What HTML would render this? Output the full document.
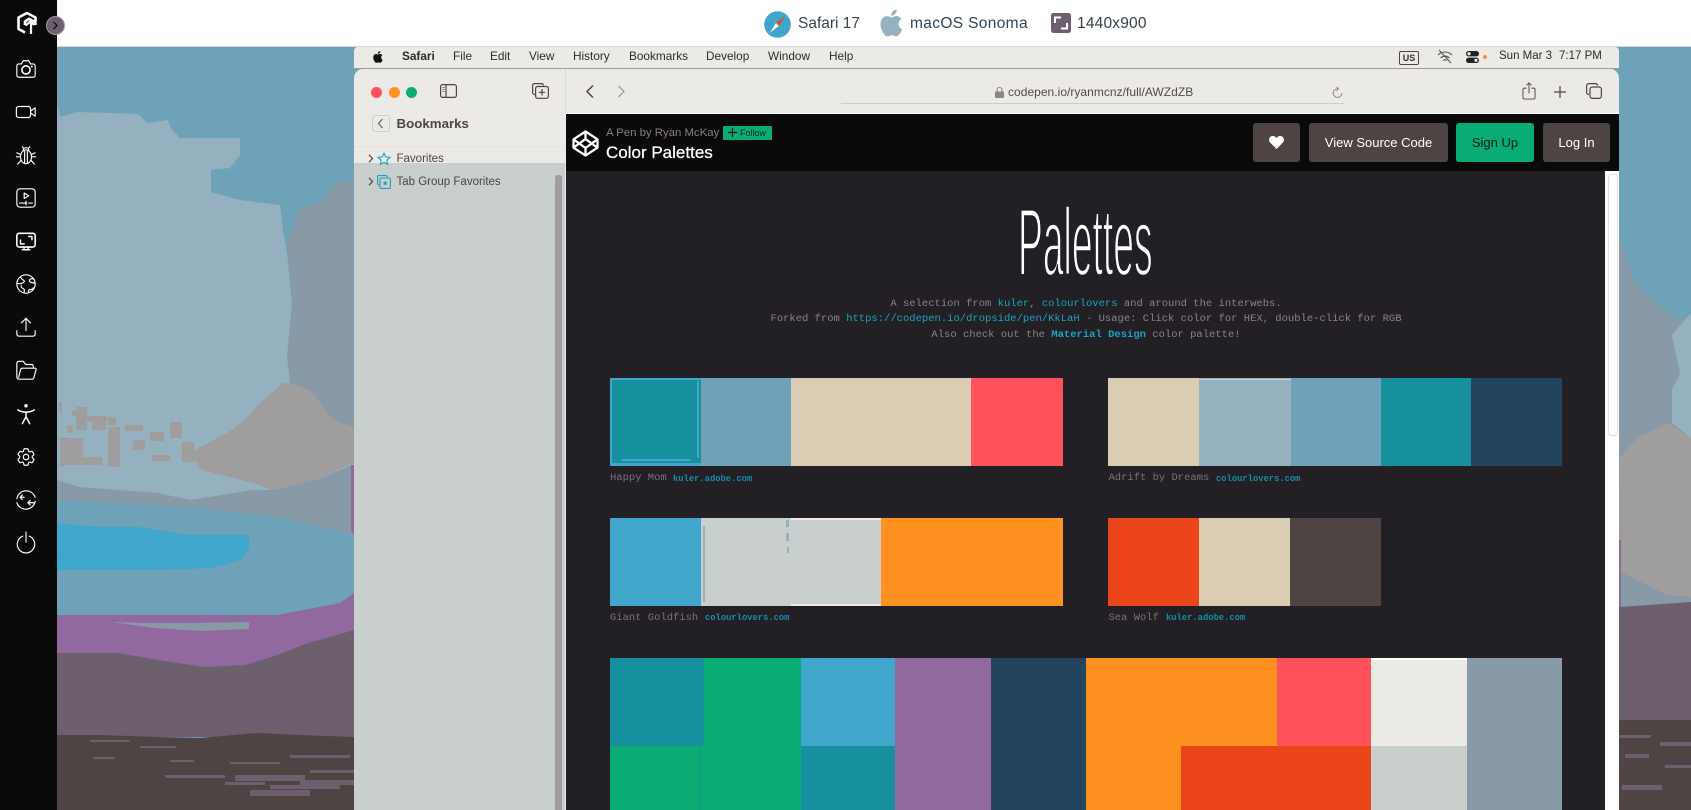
<!DOCTYPE html>
<html lang="en"><head><meta charset="utf-8"><title>Color Palettes</title>
<style>
html,body{margin:0;padding:0;width:1691px;height:810px;overflow:hidden;background:#6ea2b8;font-family:"Liberation Sans",sans-serif}
#p{position:relative;width:1691px;height:810px;overflow:hidden}
.a,.t{position:absolute}
.t{white-space:nowrap;line-height:1}
svg{position:absolute;overflow:visible}
.m{font-size:11.8px;top:51px;color:#2c2a2e}
.ic{left:15px;width:22px;height:22px;fill:none;stroke:#fff;stroke-width:1.25;stroke-linecap:round;stroke-linejoin:round}
.mono{font-family:"Liberation Mono",monospace;color:#8d808e}
.d{left:566px;width:1040px;text-align:center;font-size:10.53px}
.mono b{font-weight:400;color:#1ba3bf}
.lbl{font-size:10.5px;color:#7d707d}
.lnk{font-size:8.8px;color:#148ea8;font-weight:700}
.btn{position:absolute;top:123px;height:39px;border-radius:3px;background:#4f4444;color:#fff;font-size:13px;line-height:39px;text-align:center}
</style></head><body><div id="p">

<svg style="left:0;top:0" width="1691" height="810" viewBox="0 0 1691 810">
<rect width="1691" height="810" fill="#6ea2b8"/>
<polygon fill="#95b0be" points="57,100 60,117 68,115 77,112 138,114 147,123 168,120 172,130 180,138 240,138 240,155 230,168 211,170 211,192 240,200 280,205 283,230 287,253 292,303 300,400 354,430 354,540 57,510"/>
<polygon fill="#8899a8" points="354,180 337,182 320,203 300,208 293,227 287,240 292,303 287,357 290,383 310,390 333,420 354,430"/>
<polygon fill="#a09d9f" points="283,383 260,403 245,420 232,430 190,453 202,470 253,483 273,490 316,480 348,465 354,463 354,427 333,420 310,390 290,383"/>
<g fill="#a09d9f"><rect x="59" y="402" width="3" height="11"/><rect x="72" y="411" width="12" height="5"/><rect x="76" y="407" width="11" height="23"/><rect x="67" y="425" width="6" height="8"/><rect x="85" y="416" width="22" height="5"/><rect x="92" y="420" width="14" height="10"/><rect x="108" y="417" width="8" height="8"/><rect x="60" y="437" width="4" height="30"/><rect x="64" y="438" width="19" height="27"/><rect x="80" y="457" width="22" height="8"/><rect x="108" y="427" width="12" height="40"/><rect x="125" y="425" width="18" height="6"/><rect x="133" y="440" width="12" height="10"/><rect x="150" y="432" width="14" height="9"/><rect x="170" y="422" width="12" height="16"/><rect x="152" y="455" width="18" height="6"/><rect x="182" y="442" width="12" height="20"/></g>
<polygon fill="#8899a8" points="57,480 79,487 158,493 190,500 253,490 273,490 316,480 352,465 354,465 354,537 277,517 198,508 119,503 57,500"/>
<polygon fill="#6ea2b8" points="57,500 119,503 198,508 277,517 354,535 354,593 340,603 277,615 198,615 57,615"/>
<polygon fill="#41a6cb" points="57,523 99,527 138,527 190,535 249,535 249,548 241,560 213,568 158,570 57,570"/>
<polygon fill="#91699f" points="57,615 198,615 277,615 340,603 354,593 354,630 308,643 277,655 245,665 206,667 158,660 119,653 57,653"/>
<polygon fill="#91699f" points="351,465 354,465 354,535 351,530"/>
<polygon fill="#8899a8" points="111,622 140,623 190,623 249,622 249,629 200,631 155,628"/>
<polygon fill="#6d5f6d" points="57,653 119,653 158,660 206,667 245,665 277,655 308,643 354,630 354,737 57,737"/>
<polygon fill="#4f4444" points="57,735 100,735 158,737 200,738 257,733 300,735 354,737 354,810 57,810"/>
<g fill="#6d5f6d"><rect x="90" y="740" width="40" height="2"/><rect x="140" y="746" width="36" height="2"/><rect x="93" y="757" width="22" height="2"/><rect x="170" y="760" width="24" height="2"/><rect x="230" y="762" width="50" height="2"/><rect x="290" y="755" width="60" height="3"/><rect x="165" y="775" width="60" height="3"/><rect x="235" y="775" width="70" height="6"/><rect x="270" y="785" width="70" height="4"/><rect x="310" y="770" width="44" height="3"/><rect x="250" y="790" width="60" height="6"/><rect x="225" y="782" width="40" height="3"/><rect x="300" y="780" width="54" height="5"/></g>
<polygon fill="#8899a8" points="1619,229 1633,281 1657,305 1680,320 1691,313 1691,610 1619,610"/>
<polygon fill="#95b0be" points="1691,313 1672,335 1680,374 1672,389 1672,423 1691,438"/>
<polygon fill="#a09d9f" points="1620,457 1637,438 1668,423 1691,438 1691,597 1667,595 1633,578 1619,570"/>
<rect x="1619" y="540" width="2" height="67" fill="#91699f"/>
<polygon fill="#6d5f6d" points="1619,607 1691,602 1691,810 1619,810"/>
<rect x="1619" y="720" width="72" height="90" fill="#4f4444"/>
<g fill="#6d5f6d"><rect x="1619" y="735" width="32" height="3"/><rect x="1660" y="742" width="31" height="4"/><rect x="1625" y="754" width="24" height="4"/><rect x="1622" y="785" width="40" height="5"/><rect x="1665" y="765" width="26" height="3"/></g>
</svg>

<!-- top bar -->
<div class="a" style="left:0;top:0;width:1691px;height:46px;background:#fff;border-bottom:1px solid #d8dad9"></div>
<svg style="left:764px;top:11px" width="27" height="27" viewBox="0 0 27 27"><circle cx="13.5" cy="13.5" r="13.3" fill="#41a6cb"/><polygon points="21,5.5 15,15 12,12" fill="#ec4519"/><polygon points="6,21.5 15,15 12,12" fill="#fff"/></svg>
<div class="t" style="left:798px;top:16px;font-size:15.5px;color:#36454f">Safari 17</div>
<svg style="left:878px;top:8px" width="28" height="30" viewBox="2 1 21 22"><path fill="#95b0be" d="M18.71 19.5c-.83 1.24-1.71 2.45-3.05 2.47-1.34.03-1.77-.79-3.29-.79-1.53 0-2 .77-3.27.82-1.31.05-2.3-1.32-3.14-2.53C4.25 17 2.94 12.45 4.7 9.39c.87-1.52 2.43-2.48 4.12-2.51 1.28-.02 2.5.87 3.29.87.78 0 2.26-1.07 3.81-.91.65.03 2.47.26 3.64 1.98-.09.06-2.17 1.28-2.15 3.81.03 3.02 2.65 4.03 2.68 4.04-.03.07-.42 1.44-1.38 2.83M13 3.5c.73-.83 1.94-1.46 2.94-1.5.13 1.17-.34 2.35-1.04 3.19-.69.85-1.83 1.51-2.95 1.42-.15-1.15.41-2.35 1.05-3.11z"/></svg>
<div class="t" style="left:910px;top:16px;font-size:15.5px;letter-spacing:.35px;color:#2f4656">macOS Sonoma</div>
<svg style="left:1051px;top:13px" width="20" height="20" viewBox="0 0 20 20"><rect width="20" height="20" rx="2.5" fill="#6d5f6d"/><path d="M4 10V4.500H10M16 10V15.500H10" fill="none" stroke="#fff" stroke-width="2"/></svg>
<div class="t" style="left:1077px;top:16px;font-size:15.5px;letter-spacing:.2px;color:#36404a">1440x900</div>

<!-- left rail -->
<div class="a" style="left:0;top:0;width:57px;height:810px;background:#0a0a0a"></div>
<svg style="left:16px;top:11px" width="22" height="24" viewBox="0 0 22 24" fill="none" stroke="#fff" stroke-width="2.6" stroke-linejoin="round"><path d="M9 21.500 2.500 18V6.500L11 2l8.500 4.500V14"/><path d="M9 14V10.500L13 7.800 19 11"/><path d="M15 23V10" stroke-width="2.2"/><path d="M9.500 14.500 15 10l3 4" stroke-width="2.200"/></svg>
<div class="a" style="left:46px;top:16px;width:17px;height:17px;border-radius:50%;background:#6d5f6d;border:1px solid #a09d9f"></div>
<svg style="left:52px;top:21px" width="7" height="9" viewBox="0 0 7 9" fill="none" stroke="#111" stroke-width="1.300"><path d="M1.500.8 5 4.500 1.500 8.200"/></svg>

<svg class="ic" style="top:58px" viewBox="0 0 24 24"><path d="M2 9c0-1.500 1-2.500 2.500-2.500H7L9 3h6l2 3.500h2.500C21 6.500 22 7.500 22 9v9.500c0 1.500-1 2.500-2.500 2.500h-15C3 21 2 20 2 18.500z"/><circle cx="12" cy="13" r="4.500" stroke-width="1.700"/><circle cx="18.300" cy="9.300" r=".5"/></svg>
<svg class="ic" style="top:101px" viewBox="0 0 24 24"><rect x="1.500" y="6" width="15.500" height="12" rx="2.500"/><path d="M17 11l5-3.500v9L17 13"/></svg>
<svg class="ic" style="top:144px" viewBox="0 0 24 24"><ellipse cx="12" cy="14" rx="6" ry="7.500"/><path d="M9 7c0-2 1.500-3 3-3s3 1 3 3M8 3l1.500 2M16 3l-1.500 2M10.500 8v13M13.500 8v13M6 11.500 2 9.500M18 11.500l4-2M6 14H1.500M18 14h4.500M6.700 17.500 3 22M17.300 17.500 21 22"/></svg>
<svg class="ic" style="top:187px" viewBox="0 0 24 24"><rect x="2" y="2" width="20" height="20" rx="3.500"/><path d="M10 6.500l5 3-5 3zM5 17.500h8M15 17.500h4M12 15.500v4"/></svg>
<svg class="ic" style="top:231px" viewBox="0 0 24 24"><rect x="2" y="2.500" width="20" height="15" rx="2.500" stroke-width="1.700"/><path d="M15 6h3.500v3.500M6 10v4h4M8 20.500h8M9.800 17.500v3M14.200 17.500v3" stroke-width="1.600"/></svg>
<svg class="ic" style="top:273px" viewBox="0 0 24 24"><circle cx="12" cy="12" r="10"/><path d="M6 4.500c1 2.500 3 3 4 4s-1 2-3 3-4.500-.5-5 0M21 7c-2-1-4-1-5 .5s1 3 3 3 3 1 3 2M10 21c0-2 1-3-1-4s-3-2-2-3M15 21.500c-1-2 0-3.500 2-3.500s3-1 3-2"/></svg>
<svg class="ic" style="top:316px" viewBox="0 0 24 24"><path d="M12 16V3M7 7.500 12 2.500l5 5M2 16v3.500C2 21 3 22 4.500 22h15c1.500 0 2.500-1 2.500-2.500V16"/></svg>
<svg class="ic" style="top:359px" viewBox="0 0 24 24"><path d="M2 19.500V5c0-1.500 1-2.500 2.500-2.500H9L11.500 6h6.500C19.500 6 20 7 20 8.500V10M2 19.500C2 21 3 22 4.500 22h14c1 0 1.800-.8 2-1.500L23 11.500c.2-.8-.3-1.500-1-1.500H8c-1 0-1.600.5-1.900 1.500L4 20"/></svg>
<svg class="ic" style="top:403px" viewBox="0 0 24 24"><circle cx="12" cy="3" r="1.300" fill="#fff"/><path d="M3 7.500c3 2 6 2.500 9 2.500s6-.5 9-2.500M12 10v5M12 15l-4 7.500M12 15l4 7.500" stroke-width="1.600"/></svg>
<svg class="ic" style="top:446px" viewBox="0 0 24 24"><path d="M9.594 3.940c.09-.542.56-.94 1.110-.94h2.593c.55 0 1.020.398 1.110.94l.213 1.281c.063.374.313.686.645.870.074.040.147.083.22.127.325.196.72.257 1.075.124l1.217-.456a1.125 1.125 0 0 1 1.370.49l1.296 2.247a1.125 1.125 0 0 1-.26 1.431l-1.003.827c-.293.241-.438.613-.43.992a7.723 7.723 0 0 1 0 .255c-.008.378.137.75.43.991l1.004.827c.424.35.534.955.26 1.430l-1.298 2.247a1.125 1.125 0 0 1-1.369.491l-1.217-.456c-.355-.133-.75-.072-1.076.124a6.47 6.47 0 0 1-.22.128c-.331.183-.581.495-.644.869l-.213 1.281c-.09.543-.56.94-1.110.94h-2.594c-.55 0-1.019-.398-1.110-.94l-.213-1.281c-.062-.374-.312-.686-.644-.87a6.52 6.52 0 0 1-.22-.127c-.325-.196-.72-.257-1.076-.124l-1.217.456a1.125 1.125 0 0 1-1.369-.49l-1.297-2.247a1.125 1.125 0 0 1 .26-1.431l1.004-.827c.292-.24.437-.613.43-.991a6.932 6.932 0 0 1 0-.255c.007-.38-.138-.751-.43-.992l-1.004-.827a1.125 1.125 0 0 1-.26-1.430l1.297-2.247a1.125 1.125 0 0 1 1.370-.491l1.216.456c.356.133.751.072 1.076-.124.072-.044.146-.086.22-.128.332-.183.582-.495.644-.869l.214-1.280z"/><circle cx="12" cy="12" r="3"/></svg>
<svg class="ic" style="top:489px" viewBox="0 0 24 24"><path d="M2 10.500C3 5.500 7 2 12 2s8.500 3 10 7M22 13.500C21 18.500 17 22 12 22S3.500 19 2 15M10 9H5.500M8 6.500 5.500 9l2.500 2.500M14 15h6.500M16.500 12.500 14 15l2.500 2.500"/></svg>
<svg class="ic" style="top:532px" viewBox="0 0 24 24"><path d="M8.500 4.500A9.500 9.500 0 1 0 15.500 4.500M12 0v11"/></svg>

<!-- mac menu bar + window chrome -->
<div class="a" style="left:354px;top:47px;width:1265px;height:22px;background:#eceae7;border-radius:4px 4px 0 0;border-bottom:1px solid #a09d9f;box-sizing:border-box"></div>
<svg style="left:371px;top:50px" width="14" height="14" viewBox="0 0 24 24"><path fill="#111" d="M18.71 19.5c-.83 1.24-1.71 2.45-3.05 2.47-1.34.03-1.77-.79-3.29-.79-1.53 0-2 .77-3.27.82-1.31.05-2.3-1.32-3.14-2.53C4.25 17 2.94 12.45 4.7 9.39c.87-1.52 2.43-2.48 4.12-2.51 1.28-.02 2.5.87 3.29.87.78 0 2.26-1.07 3.81-.91.65.03 2.47.26 3.64 1.98-.09.06-2.17 1.28-2.15 3.81.03 3.02 2.65 4.03 2.68 4.04-.03.07-.42 1.44-1.38 2.83M13 3.5c.73-.83 1.94-1.46 2.94-1.5.13 1.17-.34 2.35-1.04 3.19-.69.85-1.83 1.51-2.95 1.42-.15-1.15.41-2.35 1.05-3.11z"/></svg>
<div class="t m" style="left:402px;font-weight:700">Safari</div>
<div class="t m" style="left:453px">File</div>
<div class="t m" style="left:490px">Edit</div>
<div class="t m" style="left:529px">View</div>
<div class="t m" style="left:573px">History</div>
<div class="t m" style="left:629px">Bookmarks</div>
<div class="t m" style="left:706px">Develop</div>
<div class="t m" style="left:768px">Window</div>
<div class="t m" style="left:829px">Help</div>
<div class="t" style="left:1399px;top:51px;width:18px;height:12px;border:1px solid #4f4444;border-radius:2px;font-size:9px;font-weight:700;line-height:12px;text-align:center;color:#333">US</div>
<svg style="left:1437px;top:50px" width="16" height="14" viewBox="0 0 16 14" fill="none" stroke="#555" stroke-width="1.100"><path d="M1 5c4-4 10-4 14 0M3.500 8c3-2.500 6-2.500 9 0M6 10.500c1.500-1 2.500-1 4 0M2 0 14 13"/></svg>
<svg style="left:1466px;top:51px" width="13" height="12" viewBox="0 0 13 12"><rect width="13" height="5.400" rx="2.700" fill="#222"/><rect y="6.600" width="13" height="5.400" rx="2.700" fill="#222"/><circle cx="3" cy="2.700" r="1.600" fill="#eee"/><circle cx="10" cy="9.300" r="1.600" fill="#eee"/></svg>
<div class="a" style="left:1483px;top:55px;width:4px;height:4px;background:#ff9121;border-radius:50%"></div>
<div class="t m" style="left:1499px;font-size:11.500px">Sun Mar 3</div>
<div class="t m" style="left:1559px;font-size:11.500px">7:17 PM</div>

<div class="a" style="left:354px;top:69px;width:1265px;height:44px;background:#eceae7;border-radius:9px 9px 0 0"></div>
<div class="a" style="left:354px;top:80px;width:212px;height:730px;background:#eceae7"></div>
<div class="a" style="left:354px;top:163px;width:211px;height:647px;background:#c9cfcc"></div>
<div class="a" style="left:565px;top:69px;width:1px;height:44px;background:#d8d8d5"></div>
<div class="a" style="left:354px;top:146px;width:211px;height:1px;background:#e2e2df"></div>
<div class="a" style="left:555px;top:175px;width:7px;height:635px;background:#a09d9f;border-radius:3px 3px 0 0"></div>
<div class="a" style="left:371px;top:87px;width:11px;height:11px;border-radius:50%;background:#ff525d"></div>
<div class="a" style="left:389px;top:87px;width:11px;height:11px;border-radius:50%;background:#ff9121"></div>
<div class="a" style="left:406px;top:87px;width:11px;height:11px;border-radius:50%;background:#0bac74"></div>
<svg style="left:440px;top:84px" width="17" height="14" viewBox="0 0 17 14" fill="none" stroke="#4f4444" stroke-width="1.200"><rect x=".6" y=".6" width="15.800" height="12.800" rx="2"/><path d="M6 .6v12.800"/><path d="M2.500 3.500h2M2.500 5.500h2M2.500 7.500h2" stroke-width=".8"/></svg>
<svg style="left:532px;top:83px" width="17" height="16" viewBox="0 0 17 16" fill="none" stroke="#4f4444" stroke-width="1.200"><path d="M3.500 11.500H2.500c-1 0-1.900-.8-1.900-1.900V2.500C.6 1.400 1.500.6 2.500.6h7c1 0 1.800.8 1.900 1.900"/><rect x="3.600" y="3.500" width="12.800" height="11.800" rx="2"/><path d="M10 6v6.500M6.800 9.300h6.400"/></svg>
<svg style="left:585px;top:84px" width="10" height="15" viewBox="0 0 10 15" fill="none" stroke="#4f4444" stroke-width="1.500"><path d="M8 1.500 2 7.500l6 6"/></svg>
<svg style="left:617px;top:85px" width="9" height="13" viewBox="0 0 9 13" fill="none" stroke="#a09d9f" stroke-width="1.300"><path d="M1.500 1 7 6.500 1.500 12"/></svg>
<div class="a" style="left:841px;top:103px;width:503px;height:1px;background:#c9cfcc"></div>
<svg style="left:995px;top:87px" width="9" height="11" viewBox="0 0 9 11"><rect y="4.500" width="9" height="6.500" rx="1" fill="#8b8589"/><path d="M2 5V3a2.500 2.500 0 0 1 5 0v2" fill="none" stroke="#8b8589" stroke-width="1.100"/></svg>
<div class="t" style="left:1008px;top:86px;font-size:12px;letter-spacing:.03px;color:#4f4a50">codepen.io/ryanmcnz/full/AWZdZB</div>
<svg style="left:1332px;top:86px" width="11" height="13" viewBox="0 0 11 13" fill="none" stroke="#8b8589" stroke-width="1"><path d="M5.500 2.800a4.300 4.300 0 1 0 4.300 4.300M4.500.8l2 2-2 2"/></svg>
<svg style="left:1522px;top:82px" width="14" height="18" viewBox="0 0 14 19" fill="none" stroke="#4f4444" stroke-width="1"><path d="M4.500 6.500H2.200c-1 0-1.600.6-1.600 1.600v8.300c0 1 .6 1.600 1.600 1.600h9.600c1 0 1.600-.6 1.600-1.600V8.100c0-1-.6-1.600-1.600-1.600H9.500M7 12V1M4.300 3.500 7 1l2.700 2.500"/></svg>
<svg style="left:1554px;top:86px" width="12" height="12" viewBox="0 0 12 12" fill="none" stroke="#4f4444" stroke-width="1.200"><path d="M6 0v12M0 6h12"/></svg>
<svg style="left:1586px;top:83px" width="16" height="16" viewBox="0 0 16 16" fill="none" stroke="#4f4444" stroke-width="1.200"><path d="M3 11.500c-1.400 0-2.400-.8-2.400-2.200V3C.6 1.600 1.600.6 3 .6h6.300c1.200 0 2.200.8 2.300 2"/><rect x="4" y="4" width="11.400" height="11.400" rx="2.400"/></svg>

<!-- bookmarks sidebar -->
<svg style="left:372px;top:115px" width="18" height="17" viewBox="0 0 18 17" fill="none"><rect x=".5" y=".5" width="17" height="16" rx="2.500" stroke="#c9cfcc" fill="#eceae7"/><path d="M10.500 4 6.500 8.500l4 4.500" stroke="#6d5f6d" stroke-width="1.200"/></svg>
<div class="t" style="left:396.500px;top:116.500px;font-size:13.300px;font-weight:700;color:#4f4444">Bookmarks</div>
<svg style="left:368px;top:154px" width="6" height="9" viewBox="0 0 6 9" fill="none" stroke="#4f4444" stroke-width="1.200"><path d="M1 .8l3.500 3.700L1 8.200"/></svg>
<svg style="left:377px;top:152px" width="14" height="14" viewBox="0 0 14 14" fill="none" stroke="#1ba3bf" stroke-width="1.100"><path d="M7 1l1.800 3.900 4.200.5-3.100 2.900.8 4.200L7 10.400l-3.700 2.100.8-4.200L1 5.400l4.200-.5z"/></svg>
<div class="t" style="left:396.500px;top:153.500px;font-size:11.500px;color:#4f4444">Favorites</div>
<svg style="left:368px;top:177px" width="6" height="9" viewBox="0 0 6 9" fill="none" stroke="#4f4444" stroke-width="1.200"><path d="M1 .8l3.500 3.700L1 8.200"/></svg>
<svg style="left:377px;top:175px" width="14" height="14" viewBox="0 0 14 14" fill="none" stroke="#1ba3bf" stroke-width="1.100"><path d="M2.500 10H1.500C1 10 .6 9.500.6 9V1.500C.6 1 1 .6 1.500.6H9c.5 0 1 .4 1 .9v1"/><rect x="3" y="3" width="10.400" height="10.400" rx="1.200"/><path d="M8.200 5.500l.8 1.600 1.700.2-1.200 1.200.3 1.700-1.600-.8-1.600.8.300-1.700-1.200-1.200 1.700-.2z" fill="#1ba3bf" stroke="none"/></svg>
<div class="t" style="left:396.500px;top:176.500px;font-size:11.500px;color:#4f4444">Tab Group Favorites</div>

<!-- page -->
<div class="a" style="left:566px;top:113px;width:1053px;height:1px;background:#fff"></div>
<div class="a" style="left:566px;top:114px;width:1053px;height:57px;background:#0a0a0a"></div>
<div class="a" style="left:566px;top:171px;width:1039px;height:639px;background:#222024"></div>
<div class="a" style="left:1605px;top:171px;width:14px;height:639px;background:#fff"></div>
<div class="a" style="left:1608px;top:174px;width:8px;height:260px;border:1px solid #dfdfdf;border-radius:4px;background:#fff"></div>

<svg style="left:572px;top:130px" width="27" height="27" viewBox="0 0 27 27" fill="none" stroke="#fff" stroke-width="2.300" stroke-linejoin="round"><path d="M13.500 1.500 25.500 9.300v8.400L13.500 25.500 1.500 17.700V9.300zM13.500 1.500v7.500M13.500 18v7.500M1.500 9.300 13.500 18l12-8.700M1.500 17.700 13.500 9l12 8.700"/></svg>
<div class="t" style="left:606px;top:127.500px;font-size:11.400px;color:#8a7a8a">A Pen by Ryan McKay</div>
<div class="a" style="left:723px;top:126px;width:49px;height:14px;background:#0bac74;border-radius:1px"></div>
<svg style="left:728px;top:128px" width="9" height="9" viewBox="0 0 9 9" stroke="#0a0a0a" stroke-width="1.200"><path d="M4.500 0v9M0 4.500h9"/></svg>
<div class="t" style="left:740px;top:129px;font-size:9px;color:#06231a">Follow</div>
<div class="t" style="left:606px;top:143.500px;font-size:17px;font-weight:400;color:#fff;-webkit-text-stroke:.25px #fff">Color Palettes</div>

<div class="btn" style="left:1253px;width:47px"></div>
<svg style="left:1269px;top:136px" width="15" height="13" viewBox="0 0 15 13"><path fill="#fff" d="M7.500 13 1.300 6.800C-.4 5.100-.4 2.600 1.100 1.100 2.600-.4 5.200-.3 6.700 1.200l.8.800.8-.8c1.500-1.500 4.100-1.600 5.600-.1 1.500 1.500 1.500 4-.2 5.700z"/></svg>
<div class="btn" style="left:1309px;width:139px">View Source Code</div>
<div class="btn" style="left:1456px;width:78px;background:#0bac74;color:#0a1a14;border:0">Sign Up</div>
<div class="btn" style="left:1543px;width:67px">Log In</div>

<div class="t" style="left:1018px;top:195px;font-size:96px;line-height:96px;color:#fff;transform-origin:0 0;transform:scaleX(.388);-webkit-text-stroke:2.5px #222024">Palettes</div>

<div class="t mono d" style="top:298.500px">A selection from <b>kuler</b>, <b>colourlovers</b> and around the interwebs.</div>
<div class="t mono d" style="top:313.500px">Forked from <b>https://codepen.io/dropside/pen/KkLaH</b> - Usage: Click color for HEX, double-click for RGB</div>
<div class="t mono d" style="top:329.500px">Also check out the <b style="font-weight:700">Material Design</b> color palette!</div>

<!-- palettes -->
<svg style="left:0;top:0" width="1691" height="810" viewBox="0 0 1691 810" shape-rendering="crispEdges">
<rect x="610" y="378" width="91" height="88" fill="#16909f"/><rect x="701" y="378" width="90" height="88" fill="#6ea2b8"/><rect x="791" y="378" width="180" height="88" fill="#dacdb3"/><rect x="971" y="378" width="92" height="88" fill="#ff525d"/>
<g fill="#41a6cb"><rect x="610" y="378" width="91" height="2"/><rect x="610" y="378" width="2" height="88"/><rect x="610" y="463" width="91" height="3"/><rect x="621" y="459" width="70" height="2"/><rect x="697" y="381" width="2" height="77"/></g>
<rect x="1108" y="378" width="91" height="88" fill="#dacdb3"/><rect x="1199" y="378" width="92" height="88" fill="#95b0be"/><rect x="1291" y="378" width="90" height="88" fill="#6ea2b8"/><rect x="1381" y="378" width="90" height="88" fill="#16909f"/><rect x="1471" y="378" width="91" height="88" fill="#22455d"/>
<rect x="1199" y="379" width="92" height="1" fill="#c9cfcc"/>
<rect x="610" y="518" width="91" height="88" fill="#41a6cb"/><rect x="701" y="518" width="180" height="88" fill="#c9cfcc"/><rect x="881" y="518" width="182" height="88" fill="#ff9121"/>
<rect x="791" y="518" width="90" height="2" fill="#eceae7"/><rect x="791" y="604" width="90" height="2" fill="#eceae7"/><rect x="703" y="526" width="2" height="76" fill="#95b0be"/><rect x="786" y="520" width="3" height="7" fill="#95b0be"/><rect x="786" y="533" width="3" height="8" fill="#95b0be"/><rect x="787" y="547" width="2" height="6" fill="#95b0be"/>
<rect x="1108" y="518" width="91" height="88" fill="#ec4519"/><rect x="1199" y="518" width="91" height="88" fill="#dacdb3"/><rect x="1290" y="518" width="91" height="88" fill="#4f4444"/>

<rect x="610" y="658" width="94" height="88" fill="#16909f"/><rect x="704" y="658" width="97" height="88" fill="#0bac74"/><rect x="801" y="658" width="94" height="88" fill="#41a6cb"/><rect x="895" y="658" width="96" height="152" fill="#91699f"/><rect x="991" y="658" width="95" height="152" fill="#22455d"/><rect x="1086" y="658" width="191" height="88" fill="#ff9121"/><rect x="1277" y="658" width="94" height="88" fill="#ff525d"/><rect x="1371" y="658" width="96" height="88" fill="#eceae7"/><rect x="1467" y="658" width="95" height="152" fill="#8899a8"/>
<rect x="610" y="746" width="191" height="64" fill="#0bac74"/><rect x="700" y="746" width="1" height="64" fill="#16909f"/><rect x="801" y="746" width="94" height="64" fill="#16909f"/><rect x="1086" y="746" width="95" height="64" fill="#ff9121"/><rect x="1181" y="746" width="190" height="64" fill="#ec4519"/><rect x="1371" y="746" width="96" height="64" fill="#c9cfcc"/><rect x="1371" y="658" width="96" height="2" fill="#fff"/>
</svg>

<div class="t mono lbl" style="left:610px;top:472.500px">Happy Mom</div>
<div class="t mono lnk" style="left:673px;top:474.500px">kuler.adobe.com</div>
<div class="t mono lbl" style="left:1108.500px;top:472.500px">Adrift by Dreams</div>
<div class="t mono lnk" style="left:1216px;top:474.500px">colourlovers.com</div>
<div class="t mono lbl" style="left:610px;top:612.500px">Giant Goldfish</div>
<div class="t mono lnk" style="left:705px;top:614px">colourlovers.com</div>
<div class="t mono lbl" style="left:1108.500px;top:612.500px">Sea Wolf</div>
<div class="t mono lnk" style="left:1166px;top:614px">kuler.adobe.com</div>

</div></body></html>
